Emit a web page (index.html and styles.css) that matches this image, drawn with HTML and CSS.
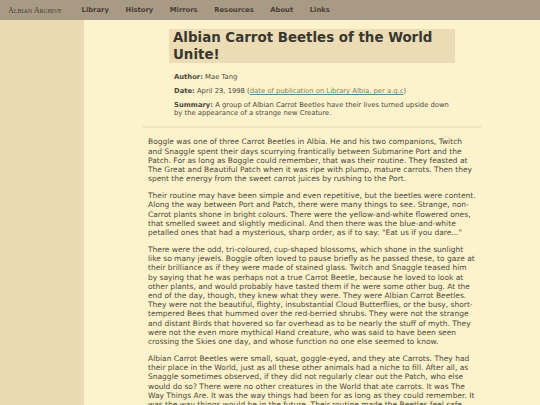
FILE: index.html
```html
<!DOCTYPE html>
<html>
<head>
<meta charset="utf-8">
<link rel="stylesheet" href="styles.css">
</head>
<body>
<nav class="topnav">
  <span class="brand">Albian Archive</span>
  <a class="navlink" href="#">Library</a>
  <a class="navlink" href="#">History</a>
  <a class="navlink" href="#">Mirrors</a>
  <a class="navlink" href="#">Resources</a>
  <a class="navlink" href="#">About</a>
  <a class="navlink" href="#">Links</a>
</nav>
<div class="layout">
  <aside class="sidebar"></aside>
  <main class="main">
    <article class="article">
      <header class="head">
        <h1 class="title">Albian Carrot Beetles of the World Unite!</h1>
        <div class="meta">
          <p><b>Author:</b> Mae Tang</p>
          <p><b>Date:</b> April 23, 1998 (<a href="#">date of publication on Library Albia, per a.g.c</a>)</p>
          <p><b>Summary:</b> A group of Albian Carrot Beetles have their lives turned upside down by the appearance of a strange new Creature.</p>
        </div>
      </header>
      <div class="story">
        <p>Boggle was one of three Carrot Beetles in Albia. He and his two companions, Twitch and Snaggle spent their days scurrying frantically between Submarine Port and the Patch. For as long as Boggle could remember, that was their routine. They feasted at The Great and Beautiful Patch when it was ripe with plump, mature carrots. Then they spent the energy from the sweet carrot juices by rushing to the Port.</p>
        <p>Their routine may have been simple and even repetitive, but the beetles were content. Along the way between Port and Patch, there were many things to see. Strange, non-Carrot plants shone in bright colours. There were the yellow-and-white flowered ones, that smelled sweet and slightly medicinal. And then there was the blue-and-white petalled ones that had a mysterious, sharp order, as if to say: "Eat us if you dare..."</p>
        <p>There were the odd, tri-coloured, cup-shaped blossoms, which shone in the sunlight like so many jewels. Boggle often loved to pause briefly as he passed these, to gaze at their brilliance as if they were made of stained glass. Twitch and Snaggle teased him by saying that he was perhaps not a true Carrot Beetle, because he loved to look at other plants, and would probably have tasted them if he were some other bug. At the end of the day, though, they knew what they were. They were Albian Carrot Beetles. They were not the beautiful, flighty, insubstantial Cloud Butterflies, or the busy, short-tempered Bees that hummed over the red-berried shrubs. They were not the strange and distant Birds that hovered so far overhead as to be nearly the stuff of myth. They were not the even more mythical Hand creature, who was said to have been seen crossing the Skies one day, and whose function no one else seemed to know.</p>
        <p>Albian Carrot Beetles were small, squat, goggle-eyed, and they ate Carrots. They had their place in the World, just as all these other animals had a niche to fill. After all, as Snaggle sometimes observed, if they did not regularly clear out the Patch, who else would do so? There were no other creatures in the World that ate carrots. It was The Way Things Are. It was the way things had been for as long as they could remember. It was the way things would be in the future. Their routine made the Beetles feel safe.</p>
      </div>
    </article>
  </main>
</div>
</body>
</html>
```
FILE: styles.css
```css
html, body {
  margin: 0;
  padding: 0;
  height: 100%;
  overflow: hidden;
}
body {
  background: #fcf2cb;
  font-family: "DejaVu Sans", Verdana, sans-serif;
  color: #4d4a3c;
}
.topnav {
  height: 20px;
  background: #a89a85;
  display: flex;
  align-items: center;
  padding-left: 8px;
  gap: 16.6px;
  box-sizing: border-box;
}
.brand {
  font-family: "Liberation Serif", "DejaVu Serif", serif;
  font-variant: small-caps;
  font-size: 8px;
  color: #4a3f33;
  width: 57px;
  white-space: nowrap;
}
.navlink {
  font-size: 6.8px;
  font-weight: bold;
  color: #4a3f33;
  text-decoration: none;
}
.layout {
  display: flex;
  height: calc(100% - 20px);
}
.sidebar {
  width: 84px;
  flex: none;
  background: #e9dab4;
}
.main {
  flex: 1;
}
.article {
  margin-left: 59px;
  width: 338px;
}
.head {
  padding-top: 9px;
  border-bottom: 2px solid #f0e4bf;
  padding-bottom: 9px;
}
.title {
  width: 278px;
  margin: 0 auto;
  background: #ecdcb6;
  padding: 0 4px;
  font-size: 13.4px;
  line-height: 17px;
  font-weight: bold;
  color: #3a372e;
}
.meta {
  padding: 10px 31px 0 31px;
  font-size: 6.8px;
  line-height: 8px;
}
.meta p {
  margin: 0 0 6px 0;
}
.meta p:last-child {
  margin-bottom: 0;
}
.meta a {
  color: #5b8c8a;
}
.story {
  padding: 9.4px 5px 0 5px;
  font-size: 7.5px;
  line-height: 9.2px;
}
.story p {
  margin: 0 0 7.8px 0;
}
```
